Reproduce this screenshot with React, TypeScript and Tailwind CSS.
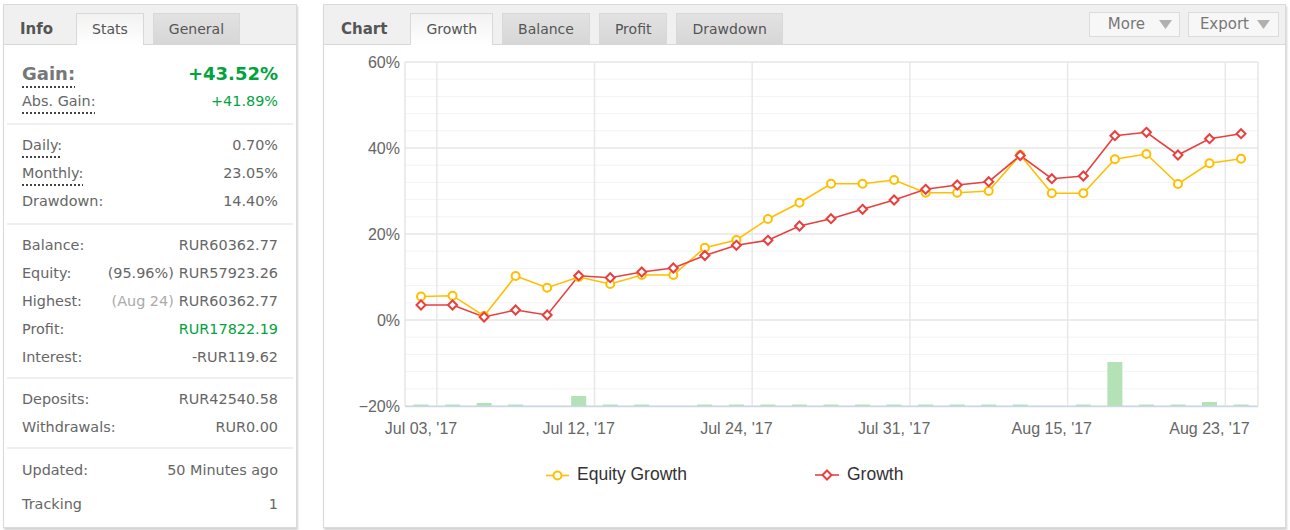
import React from "react";

const equityY = [
  296.5, 295.7, 316, 276, 287.7, 277, 284, 275, 275, 247.7, 240, 219, 202.7, 183.7, 183.7, 180,
  192.7, 192.7, 191, 155, 193.3, 193.3, 159.3, 154, 184, 163.3, 158.7,
];
const growthY = [
  305, 305, 317, 310, 315, 275.7, 277.7, 272, 268, 255.5, 245.3, 240.3, 226, 218.7, 209.3, 200,
  189.3, 185, 181.7, 155.5, 178.7, 176, 135.7, 132.3, 155, 138.7, 133.7,
];
const barH = [
  1.5, 1.5, 3, 1.5, 0, 10, 1.5, 1.5, 0, 1.5, 1.5, 1.5, 1.5, 1.5, 1.5, 1.5, 1.5, 1.5, 1.5, 1.5, 0,
  1.5, 44, 1.5, 1.5, 4, 1.5,
];
const px = (i: number) => 421 + i * 31.54;

const xLabels = ["Jul 03, '17", "Jul 12, '17", "Jul 24, '17", "Jul 31, '17", "Aug 15, '17", "Aug 23, '17"];
const yLabels = ["60%", "40%", "20%", "0%", "−20%"];

const YELLOW = "#ffbf00";
const RED = "#e8403f";

const Diamond = ({ x, y }: { x: number; y: number }) => (
  <path
    d={`M${x} ${y - 4.5}L${x + 4.5} ${y}L${x} ${y + 4.5}L${x - 4.5} ${y}Z`}
    fill="#fff"
    stroke={RED}
    strokeWidth={2}
  />
);

const Tab = ({ label, active }: { label: string; active?: boolean }) => (
  <div
    className={`h-[32px] -mb-px px-[15px] flex items-center border border-b-0 border-[#d8d8d8] text-[14px] text-[#555] ${
      active ? "bg-gradient-to-b from-[#f2f2f2] to-white" : "bg-gradient-to-b from-[#e2e2e2] to-[#d6d6d6]"
    }`}
  >
    {label}
  </div>
);

const Row = ({
  label,
  value,
  note,
  noteLight,
  dotted,
  green,
  h = "h-[28px]",
}: {
  label: string;
  value: string;
  note?: string;
  noteLight?: boolean;
  dotted?: boolean;
  green?: boolean;
  h?: string;
}) => (
  <div className={`flex justify-between items-center ${h}`}>
    <span
      className={dotted ? "underline decoration-dotted decoration-2 decoration-[#444] underline-offset-[6px]" : ""}
    >
      {label}
    </span>
    <span className={green ? "text-[#00a33d]" : ""}>
      {note && <span className={noteLight ? "text-[#aaa] mr-[5px]" : "mr-[5px]"}>{note}</span>}
      {value}
    </span>
  </div>
);

const Sep = () => <div className="h-[2px] mx-[3px] bg-[#efefef]" />;

const DownTri = () => (
  <svg width="13" height="9" viewBox="0 0 13 9">
    <polygon points="0,0 13,0 6.5,9" fill="#b0b0b0" />
  </svg>
);

export default function App() {
  const eqPath = equityY.map((y, i) => `${i ? "L" : "M"}${px(i)} ${y}`).join("");
  const grPath = growthY.map((y, i) => `${i ? "L" : "M"}${px(i)} ${y}`).join("");

  return (
    <div
      className="w-[1290px] h-[530px] bg-white pt-[4px] pl-[3px] flex gap-[26px]"
      style={{ fontFamily: '"DejaVu Sans", Verdana, sans-serif' }}
    >
      {/* Info panel */}
      <div className="w-[294px] h-[524px] border border-[#dadada] bg-white shadow-[1px_2px_2px_rgba(0,0,0,0.18)] flex flex-col">
        <div className="h-[40px] shrink-0 bg-[#f0f0f0] border-b border-[#d8d8d8] flex items-end gap-[9px] pl-4">
          <div className="h-[32px] flex items-center font-bold text-[15px] text-[#555] mr-[14px] pt-[2px]">Info</div>
          <Tab label="Stats" active />
          <Tab label="General" />
        </div>
        <div className="text-[14.4px] text-[#666]">
          <div className="px-[18px] pt-[13px] pb-[7px]">
            <div className="flex justify-between items-center h-[30px] text-[18px] font-bold">
              <span className="text-[#777] underline decoration-dotted decoration-2 decoration-[#444] underline-offset-[7px]">
                Gain:
              </span>
              <span className="text-[#00a33d]">+43.52%</span>
            </div>
            <Row label="Abs. Gain:" value="+41.89%" dotted green />
          </div>
          <Sep />
          <div className="px-[18px] pt-[7px] pb-[7px]">
            <Row label="Daily:" value="0.70%" dotted />
            <Row label="Monthly:" value="23.05%" dotted />
            <Row label="Drawdown:" value="14.40%" />
          </div>
          <Sep />
          <div className="px-[18px] pt-[7px] pb-[5px]">
            <Row label="Balance:" value="RUR60362.77" />
            <Row label="Equity:" note="(95.96%)" value="RUR57923.26" />
            <Row label="Highest:" note="(Aug 24)" noteLight value="RUR60362.77" />
            <Row label="Profit:" value="RUR17822.19" green />
            <Row label="Interest:" value="-RUR119.62" />
          </div>
          <Sep />
          <div className="px-[18px] pt-[7px] pb-[5px]">
            <Row label="Deposits:" value="RUR42540.58" />
            <Row label="Withdrawals:" value="RUR0.00" />
          </div>
          <Sep />
          <div className="px-[18px] pt-[5px]">
            <Row label="Updated:" value="50 Minutes ago" h="h-[34px]" />
            <Row label="Tracking" value="1" h="h-[34px]" />
          </div>
        </div>
      </div>

      {/* Chart panel */}
      <div className="w-[963px] h-[524px] border border-[#dadada] bg-white shadow-[1px_2px_2px_rgba(0,0,0,0.18)] flex flex-col">
        <div className="h-[40px] shrink-0 bg-[#f0f0f0] border-b border-[#d8d8d8] flex items-end gap-[9px] pl-[17px]">
          <div className="h-[32px] flex items-center font-bold text-[15px] text-[#555] mr-[14px] pt-[2px]">Chart</div>
          <Tab label="Growth" active />
          <Tab label="Balance" />
          <Tab label="Profit" />
          <Tab label="Drawdown" />
          <div className="ml-auto self-center mr-[6px] flex gap-[8px]">
            <div className="w-[91px] h-[25px] border border-[#dcdcdc] bg-[#f7f7f7] flex items-center justify-end gap-[14px] pr-[7px] text-[15px] text-[#777]">
              More
              <DownTri />
            </div>
            <div className="w-[91px] h-[25px] border border-[#dcdcdc] bg-[#f7f7f7] flex items-center justify-end gap-[8px] pr-[8px] text-[15px] text-[#777]">
              Export
              <DownTri />
            </div>
          </div>
        </div>
        <svg width="961" height="482" viewBox="324 45 961 482" style={{ fontFamily: '"Liberation Sans", Arial, sans-serif' }}>
          {Array.from({ length: 21 }, (_, k) => {
            const y = 62 + k * 17.2;
            const major = k % 5 === 0;
            return (
              <line
                key={k}
                x1={405}
                x2={1258}
                y1={y}
                y2={y}
                stroke={major ? "#e6e6e6" : "#f3f3f3"}
                strokeWidth={major ? 1.5 : 1}
              />
            );
          })}
          {Array.from({ length: 6 }, (_, k) => {
            const x = 436.8 + k * 157.7;
            return <line key={k} x1={x} x2={x} y1={62} y2={406} stroke="#e8e8e8" strokeWidth={1.5} />;
          })}
          <line x1={405} x2={405} y1={62} y2={406} stroke="#e6e6e6" strokeWidth={1.5} />
          <line x1={1258} x2={1258} y1={62} y2={406} stroke="#e6e6e6" strokeWidth={1.5} />
          {barH.map((h, i) =>
            h > 0 ? <rect key={i} x={px(i) - 7.5} y={406 - h} width={15} height={h} fill="#b4e2b6" /> : null
          )}
          <line x1={405} x2={1258} y1={406.5} y2={406.5} stroke="#ccd6eb" strokeWidth={1.5} />
          {yLabels.map((t, k) => (
            <text key={t} x={400} y={62 + k * 86 + 6} textAnchor="end" fontSize={16} fill="#666">
              {t}
            </text>
          ))}
          {xLabels.map((t, k) => (
            <text key={t} x={px(k * 5)} y={434} textAnchor="middle" fontSize={16} fill="#666">
              {t}
            </text>
          ))}
          <path d={eqPath} fill="none" stroke={YELLOW} strokeWidth={1.6} />
          <path d={grPath} fill="none" stroke={RED} strokeWidth={1.6} />
          {equityY.map((y, i) => (
            <circle key={i} cx={px(i)} cy={y} r={4} fill="#fff" stroke={YELLOW} strokeWidth={2} />
          ))}
          {growthY.map((y, i) => (
            <Diamond key={i} x={px(i)} y={y} />
          ))}
          {/* legend */}
          <line x1={546} x2={569} y1={475.5} y2={475.5} stroke={YELLOW} strokeWidth={1.6} />
          <circle cx={557.5} cy={475.5} r={4} fill="#fff" stroke={YELLOW} strokeWidth={2} />
          <text x={577} y={480} fontSize={17.5} fill="#333">
            Equity Growth
          </text>
          <line x1={815} x2={839} y1={475} y2={475} stroke={RED} strokeWidth={1.6} />
          <Diamond x={827} y={475} />
          <text x={847} y={480} fontSize={17.5} fill="#333">
            Growth
          </text>
        </svg>
      </div>
    </div>
  );
}
